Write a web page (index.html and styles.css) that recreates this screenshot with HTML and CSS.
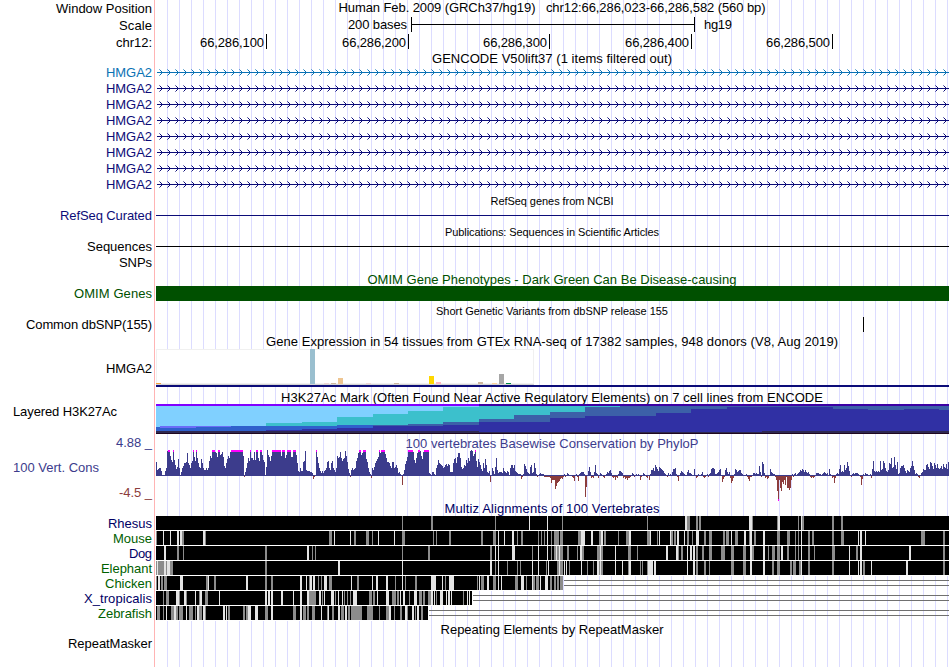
FILE: index.html
```html
<!DOCTYPE html>
<html lang="en">
<head>
<meta charset="utf-8">
<title>Genome Browser</title>
<link rel="stylesheet" href="styles.css">
</head>
<body>
<main class="browser" id="browser"></main>
<script src="tracks.js"></script>
</body>
</html>
```
FILE: styles.css
```css
body { margin: 0; background: #fff; }

.browser {
  width: 949px;
  height: 667px;
  overflow: hidden;
  font: 13px/15px "Liberation Sans", Arial, sans-serif;
  color: #000;
  background:
    linear-gradient(#ffb4b4, #ffb4b4) 154px 0 / 1px 100% no-repeat,
    repeating-linear-gradient(90deg, #dcdcff 0 1px, transparent 1px 12px) 167px 0 / 782px 100% no-repeat;
}

.row {
  display: grid;
  grid-template-columns: 152px 793px;
  grid-template-rows: 100%;
  column-gap: 4px;
}

.label {
  display: flex;
  flex-direction: column;
  align-items: flex-end;
  justify-content: center;
  white-space: pre;
}
.label.raised { padding-bottom: 2px; }
.label.start { justify-content: flex-start; }
.label .left { align-self: flex-start; margin-left: 13px; }
.label .low { margin-top: 10px; }
.label.cons { justify-content: flex-start; padding-top: 10px; }

.title {
  display: flex;
  align-items: center;
  justify-content: center;
  white-space: pre;
  padding-right: 1px;
}
.title.small { font-size: 11px; }
.title.lowered { padding-top: 2px; }
.title.lowest { padding-top: 4px; }
.title.lifted { padding-bottom: 2px; }
.track { display: block; }

.scale { display: flex; align-items: flex-start; }
.scale .size { width: 251px; text-align: right; margin-right: 4px; }
.scale .bracket {
  box-sizing: border-box;
  width: 284px;
  height: 15px;
  border: solid #000;
  border-width: 0 1px;
  background: linear-gradient(#000, #000) 0 7px / 100% 1px no-repeat;
}
.scale .assembly { margin-left: 9px; }

.ruler { display: flex; }
.ruler .tick {
  box-sizing: border-box;
  height: 15px;
  line-height: 17px;
  text-align: right;
  padding-right: 2px;
  border-right: 1px solid #000;
}

.black { color: #000; }
.blue { color: #0c0c78; }
.sky { color: #0a72b4; }
.green { color: #005000; }
.aligned { color: #006000; }
.align-blue { color: #000064; }
.cons-blue { color: #3c3c8c; }
.cons-red { color: #8c3c3c; }
```
FILE: tracks.js
```js
const browser = document.getElementById('browser');
const W = 793, LEFT = 156;

const rect = (x, y, w, h, fill) => `<rect x="${x}" y="${y}" width="${w}" height="${h}" fill="${fill}"/>`;
const text = (s, width, cls = '') => `<span class="${cls}" data-width="${width}">${s}</span>`;
const svg = (h, body) => `<svg class="track" width="${W}" height="${h}" shape-rendering="crispEdges">${body}</svg>`;

function row(height, label, content, labelClass = '') {
  const el = document.createElement('section');
  el.className = 'row';
  el.style.height = height + 'px';
  el.innerHTML = `<div class="label ${labelClass}">${label}</div>${content}`;
  browser.append(el);
}
const title = (height, s, width, cls = '', label = '', labelClass = '') =>
  row(height, label, `<div class="title ${cls}">${text(s, width)}</div>`, labelClass);

/* position and scale */
title(17, 'Human Feb. 2009 (GRCh37/hg19)   chr12:66,286,023-66,286,582 (560 bp)', 427, 'lifted', text('Window Position', 96));
row(17, text('Scale', 33), `<div class="scale"><span class="size">${text('200 bases', 59)}</span><span class="bracket"></span><span class="assembly">${text('hg19', 28)}</span></div>`);
const ticks = [[266, 100], [408, 200], [549, 300], [691, 400], [832, 500]];
let edge = LEFT;
row(17, text('chr12:', 36), '<div class="ruler">' + ticks.map(([x, n]) => {
  const w = x + 1 - edge;
  edge = x + 1;
  return `<span class="tick" style="width:${w}px">${text('66,286,' + n, 64)}</span>`;
}).join('') + '</div>');

/* gene models */
title(14, 'GENCODE V50lift37 (1 items filtered out)', 240);
function gene(color) {
  let s = rect(1, 7, W - 1, 1, color);
  for (let x = 6; x < W; x += 8) {
    for (let d = 1; d < 4; d++) {
      const o = d === 3 ? 0.55 : 1;
      s += `<g opacity="${o}">${rect(x - d, 7 - d, 1, 1, color)}${rect(x - d, 7 + d, 1, 1, color)}</g>`;
    }
  }
  return svg(16, s);
}
for (let i = 0; i < 8; i++) row(16, text('HMGA2', 46, i ? 'blue' : 'sky'), gene(i ? '#0c0c78' : '#0a72b4'), 'raised');

title(15, 'RefSeq genes from NCBI', 123, 'small lowered');
row(17, text('RefSeq Curated', 92, 'blue'), svg(17, rect(0, 7, W, 1, '#0c0c78')), 'raised');
title(15, 'Publications: Sequences in Scientific Articles', 214, 'small');
row(15, text('Sequences', 65), svg(15, rect(0, 6, W, 1, '#000')), 'raised');
row(17, text('SNPs', 33), '', 'raised');
title(14, 'OMIM Gene Phenotypes - Dark Green Can Be Disease-causing', 369, 'green');
row(15, text('OMIM Genes', 78, 'green'), svg(15, rect(0, 0, W, 15, '#005000')));
title(16, 'Short Genetic Variants from dbSNP release 155', 232, 'small lowest');
row(15, text('Common dbSNP(155)', 126), svg(15, rect(707, 0, 1, 15, '#000')));

/* expression */
title(16, 'Gene Expression in 54 tissues from GTEx RNA-seq of 17382 samples, 948 donors (V8, Aug 2019)', 572, 'lowered');
const tissues = [[0, 1, '#f2a03c'], [154, 35, '#9abfcf'], [168, 1, '#eed5d2'], [175, 1, '#cdb79e'], [182, 6, '#eec591'],
  [210, 1, '#eed5d2'], [238, 1, '#cdb79e'], [273, 8, '#ffd700'], [280, 2, '#ffb6c1'], [322, 2, '#cdb79e'],
  [336, 1, '#ffd39b'], [343, 10, '#a6a6a6'], [350, 1, '#008b45']];
row(40, text('HMGA2', 46), svg(40,
  rect(0, 1, 378, 36, '#f0f0f0') + rect(1, 2, 376, 33, '#fff') + rect(0, 36, 378, 1, '#d4d4d4') +
  tissues.map(([x, h, c]) => rect(x, 36 - h, 5, h, c)).join('') + rect(0, 37, W, 2, '#0c0c78')), 'expr');

/* histone marks: [x, top] steps of each layer, filled to the bottom */
title(16, 'H3K27Ac Mark (Often Found Near Active Regulatory Elements) on 7 cell lines from ENCODE', 542, 'lowered');
const layers = [
  ['#80d0ff', [[156, 406]]],
  ['#3cc0cc', [[156, 427], [266, 423], [302, 422], [337, 417], [373, 414], [408, 411], [443, 407], [479, 406]]],
  ['#6c6cf8', [[156, 427], [160, 426], [231, 427]]],
  ['#3060cc', [[156, 427], [160, 428], [196, 427], [231, 426], [302, 426], [337, 425], [373, 426]]],
  ['#3c60a8', [[156, 431], [337, 428], [373, 425], [408, 424], [443, 422], [479, 419], [514, 415], [550, 412], [585, 407], [620, 406]]],
  ['#3030a4', [[156, 431], [266, 430], [302, 429], [337, 428], [373, 426], [443, 425], [479, 422], [514, 422], [550, 418], [585, 416], [656, 413], [691, 409], [727, 407], [833, 409], [868, 410], [904, 409], [939, 410]]],
  ['#2e2850', [[156, 431], [443, 431], [479, 432], [762, 431]]],
  ['#200820', [[156, 433]]]
];
row(31, text('Layered H3K27Ac', 104, 'left'), svg(30,
  layers.map(([c, steps]) => steps.map(([x, y], i) => {
    const end = i + 1 < steps.length ? steps[i + 1][0] : 949;
    return rect(x - 156, y - 404, end - x, 434 - y, c);
  }).join('')).join('') + rect(0, 0, 323, 2, '#8000ff') + rect(323, 0, W, 2, '#3c00a4')), 'start');

/* conservation, one letter per column: a-z above the axis, A-Y below, # and ! clipped */
title(15, '100 vertebrates Basewise Conservation by PhyloP', 293, 'cons-blue lowered', text('4.88 _', 36, 'cons-blue'));
const scores = `
nfghheaaae hy##tpn#pk giqhadhjmm nwmkhmo#so #rmihqmhff hfhotr###x ws##uvxsjh mqtrx##### #######tAd hmro#rrpxp
##ro##upna izusot#### #####t###r u####ss### umedheenoy feeeddcCA. #smhececef hnohfmohfd htrsxroqry tngcAfhfgh
orw##uw### qnhdbBhfim oqs#w####v rnnmjhnnhi khcdbaIbfl os#####xpm rw##
ytqx#####c baddbahkpm lkjhikljlk dddmqrmsww righkjpmro yzytv#oiqn kgemhqkdce Fahebirfcd ddchedceda hkkhkedcbb
bCAbljgdcb ikcdmhbAab cbbbAAAAAA BGDDDMJGFE CBCAbAacba aaABEabAEb cdddbUKaei dBABdkcbBa cbaABabdce fcABADABbe
edcBACBDBB AacbAababa DAacbaABaD bffhekigei hgfecbaAca badgghbAEa cedcbaadfc
cbaagaBAba abdABAabAb cghhgbbcdf gaFCAfhdbd BGEBbgfdef fcbaaabACE AAaccbcbbj dAnlcBACBa gdcbbADO!D LOFHDIALLN
LDbAbcabcd fegfdfdcdb ABABAacccb babcdcbcag baBAGBbcbg kdedkfhnje aAbcbcccba AICbacbbaa bBgoededed ofgomhedfm
lrhiskgnbc hjjkhecfed hjojfbcbAB acdgffklig nmjgmkhlhg hjglihlgn`.replace(/\s/g, '');
const axis = 26;
const wiggle = [...scores].map((c, x) => {
  if (c === '#') return rect(x, 2, 1, axis - 2, '#3c3c8c') + rect(x, 0, 1, 2, '#ff00ff');
  if (c === '!') return rect(x, axis, 1, 23, '#8c3c3c') + rect(x, axis + 23, 1, 2, '#ff00ff');
  if (c >= 'a') return rect(x, axis - (c.charCodeAt(0) - 96), 1, c.charCodeAt(0) - 96, '#3c3c8c');
  if (c >= 'A') return rect(x, axis, 1, c.charCodeAt(0) - 64, '#8c3c3c');
  return '';
}).join('') + rect(0, axis - 1, W, 1, '#3c3c8c');
row(53, text('100 Vert. Cons', 86, 'left cons-blue') + text('-4.5 _', 33, 'low cons-red'), svg(53, wiggle), 'cons');

/* alignments: x position, width (default 1), g for weak or w for missing */
title(13, 'Multiz Alignments of 100 Vertebrates', 215, 'align-blue lifted');
const species = [
  ['Rhesus', 44, 949, 'g402 g431,2 g495 w529 w547 g562 g647 w685,2 g687,3 g696,2 g699,2 w749,3 g752 g777 w778,2 g798 w801 g802,2 g832,2 g841,2'],
  ['Mouse', 39, 949, 'g156 w163 w170 w177,2 w180,2 g182,2 w203,2 g205 g329,3 w334 w350 g354,2 g366,3 g372 w378 w394 g402,3 g433 g436 g449,2 g481,2 g493,3 w498 w504 w512,2 g517 g521,2 g538 g541 g544 w547 g551 g554,5 g560,3 g578,3 w581,4 w591,2 g599,2 w601,2 g604,2 g618 g626,3 w629,2 g647,3 w650 g657 w659 w670 g671,2 g674,2 w677,2 w684 g687,2 g692 w696,3 g704,2 g709,3 g723,2 g726,3 w731 g735,3 w744,2 g749 w750,2 g754,2 w763,2 g777,3 g787,3 g795 g798 w801 g808,2 g812,2 g832,2 g841,3 w858 w860,2 w865 g921,4 g943,2'],
  ['Dog', 23, 949, 'w164,2 g177,2 g183 g265,2 w307,2 g312 g315 g402 g428,2 g490,2 w495 w498 w512,3 g532 w538 w547 g551 g554,2 w556 g557,2 w559 g560,3 g567,2 g577 w580,2 g582,2 g597,3 w600 g601,2 w615 g628,3 g637 w666,2 w676,2 g678 g681,2 w687 w690,2 w693,2 g696,2 g702,2 g709,3 g721,4 g731,3 g743,3 w750,2 g752,2 w763,2 g768 g772,3 g777,3 w781,2 g787,2 g795 g798 w801 g808,2 g814 g832,3 w849 g856,2 w860,2 w909,2 g943,2'],
  ['Elephant', 51, 949, 'g156 w157 g158,6 w164,2 g166 w167,3 g170,3 g265,2 w338,2 w402 w490,2 g495 w498 g507 g517 g520 w532 w538 g546 w548 g557,2 w559 g560,3 w564 w566 g569 w581 g587 g593 w597,2 g599 w600 g601,2 w615 w622 g628 w629,2 g640 g642 g647 w648,5 w654,2 w687 w693,2 g696,2 g704,2 g709 g731,3 g743,3 w750,2 w763,2 g772,2 g777,3 g790,2 g793,3 g799,2 w801 g808,2 g832,2 w849 w858 w860,2 g863,2 w871 w906,2 g943,2'],
  ['Chicken', 47, 563, 'g156 w158,2 g161,2 g164,3 w180,3 g206,2 w208 g214,2 w246,2 g265,2 g271,2 w300,2 w306 g309 w310,2 w313,2 g318 g321 w324,3 g329,3 w351 g357,2 w372 w376,2 w386,2 g395 w402 g405 g415,2 w431,5 w442 g445 w449,5 g477 w479 g481,3 w487,2 g493,3 w498 w501 g515,3 w521,3 g526 w532 g533,2 g536,3 w540 w545,3 g550,2 g554,2 g557,2 g560,3'],
  ['X_tropicalis', 68, 472, 'g163 g166,3 w176,3 g179 w184,2 g186 w195 g199 w200,2 g205,3 w219 w265,2 w268,2 w271,2 w281,2 w293 w300,2 w307,2 g309,4 g313,3 w319,2 g322 w324 w331,3 g335 w338 w342 g344 g347 g350 w353,4 g369,3 g373,2 w377 w386,3 g392,4 g397,2 w400 w403,2 g409 w414,3 g419,3 g423,2 g428,3 w431,2 w434 g436 w440,3 w446 w448,2 w451 g463 w467 w469'],
  ['Zebrafish', 54, 428, 'g157,3 g163 w166 g171,3 w174,2 g176,2 g179,4 w186 g189,4 g195 w197,2 g199,3 w203,2 g205 w223,2 w226 g228,2 g243,2 g246,2 w248,3 w255,3 g265,3 w271,2 g293,3 w300,2 g303,3 g307,2 g312,3 w321 g327 w328 g332,2 w338,2 g341,3 w345,2 g348,2 g351,11 g367,6 g379 g386,3 w389,2 g394 g400,2 w405,2 g407 w412,2 g415 w417,2 g421,2']
];
for (const [name, width, end, marks] of species) {
  let s = rect(0, 0, end - LEFT, 15, '#fff') + rect(0, 0, end - LEFT, 14, '#000');
  for (const m of marks.split(' ')) {
    const [x, w = 1] = m.slice(1).split(',').map(Number);
    s += rect(x - LEFT, 0, w, 14, m[0] === 'g' ? '#8c8c8c' : '#e4e4e4');
  }
  if (end < 949) s += rect(end + 1 - LEFT, 4, W, 1, '#707070') + rect(end + 1 - LEFT, 9, W, 1, '#707070');
  row(15, text(name, width, ['Rhesus', 'Dog', 'X_tropicalis'].includes(name) ? 'align-blue' : 'aligned'), svg(15, s));
}

title(16, 'Repeating Elements by RepeatMasker', 223);
row(14, text('RepeatMasker', 84), '', 'raised');

/* spread each text over its nominal width */
for (const el of document.querySelectorAll('[data-width]')) {
  const gap = (el.dataset.width - el.getBoundingClientRect().width) / (el.textContent.length - 1);
  el.style.letterSpacing = gap + 'px';
  el.style.marginRight = -gap + 'px';
}
```
